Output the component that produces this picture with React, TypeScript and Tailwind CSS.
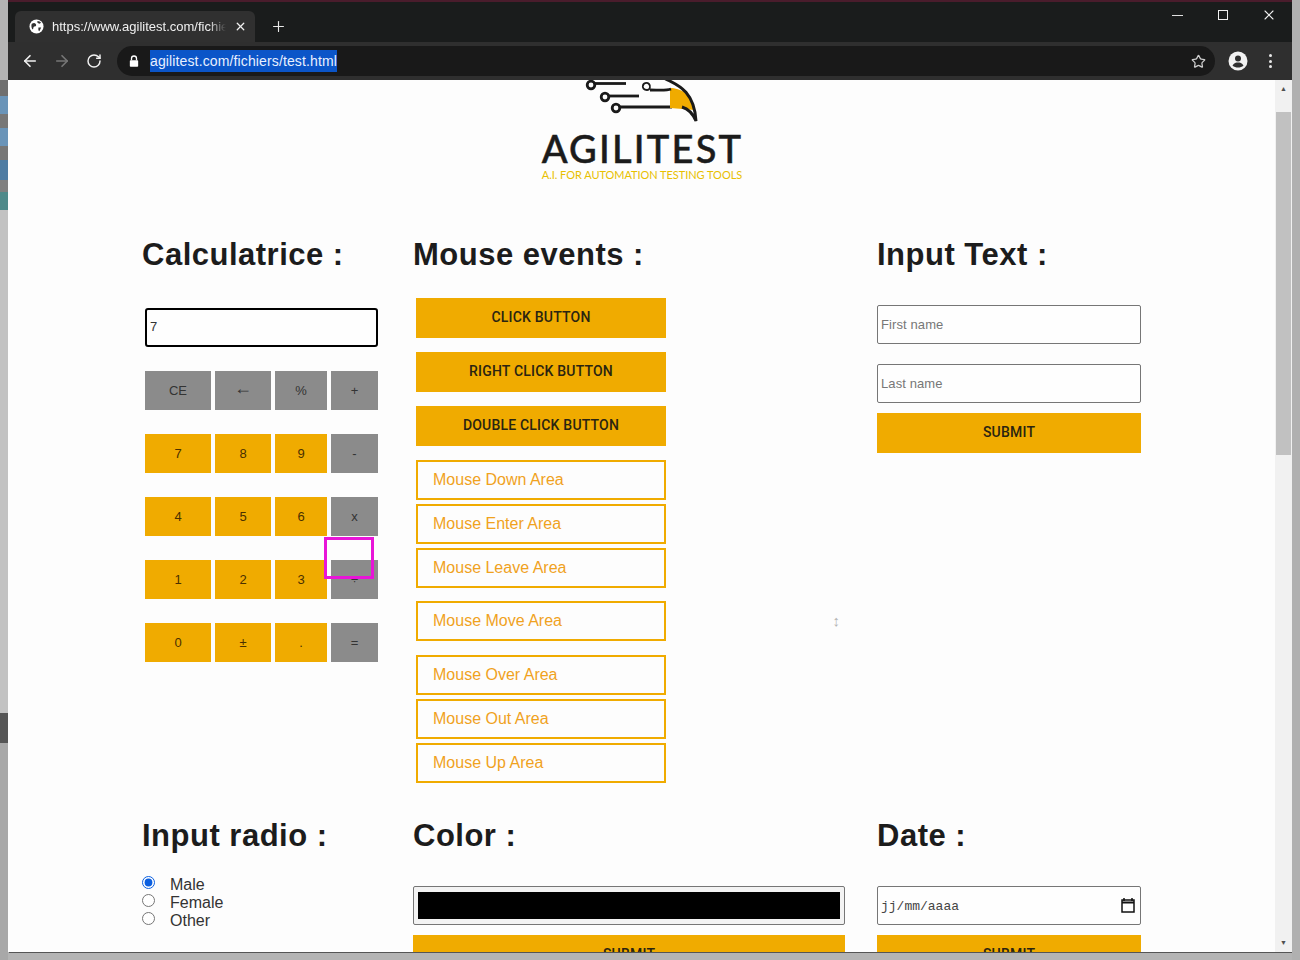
import React from "react";
import { ArrowLeft, ArrowRight, RotateCw, Star, X, Plus } from "lucide-react";

const sans = "font-['Liberation_Sans',Arial,sans-serif]";

function Heading({ children }: { children: React.ReactNode }) {
  return <h2 className="h-[36px] text-[31px] leading-[38px] font-bold tracking-[0.5px] text-[#1c1c1c]">{children}</h2>;
}

function CalcKey({ label, gray }: { label: string; gray?: boolean }) {
  return (
    <div className={`h-[39px] flex items-center justify-center ${label === "←" ? "text-[18px] pb-[5px]" : "text-[13px]"} ${gray ? "bg-[#8b8b8b] text-[#333333]" : "bg-[#f0ab00] text-[#4a3000]"}`}>
      {label}
    </div>
  );
}

function ActionButton({ label, w = "w-[250px]", h = "h-[40px]" }: { label: string; w?: string; h?: string }) {
  return (
    <div className={`${w} ${h} shrink-0 bg-[#f0ab00] flex items-center justify-center pb-[1px] font-['Roboto',sans-serif] text-[14px] font-medium tracking-[0.2px] text-[#2a2411]`}>
      {label}
    </div>
  );
}

function Area({ label }: { label: string }) {
  return (
    <div className="w-[250px] h-[40px] border-2 border-[#f0ab00] flex items-center pl-[15px] text-[16px] text-[#f0a21e]">
      {label}
    </div>
  );
}

function TextField({ placeholder }: { placeholder: string }) {
  return (
    <input
      readOnly
      placeholder={placeholder}
      className="block w-[264px] h-[39px] border border-[#767676] rounded-[2px] px-[3px] text-[13px] tracking-[0.1px] bg-[#fefefe] placeholder:text-[#777777]"
    />
  );
}

function Logo() {
  return (
    <svg viewBox="0 0 120 45" className="w-[120px] h-[45px] block" fill="none">
      <g stroke="#1a1a1a" strokeWidth="2.8">
        <circle cx="9" cy="5" r="3.8" />
        <circle cx="23" cy="17" r="3.8" />
        <circle cx="34" cy="28" r="3.8" />
        <path d="M13 3.5H44" />
        <path d="M27 16H57" />
        <path d="M38 27H90" />
      </g>
      <path d="M61 6c0-3 4-4 6-2s1 6-2 6-5-2-4-5" stroke="#1a1a1a" strokeWidth="1.8" />
      <path d="M88 8C98 8 111 14 113 30L88 28Z" fill="#f0ab00" />
      <path d="M82 -2C92 4 112 8 114 41C111 34 107 29 100 27" stroke="#1a1a1a" strokeWidth="3" />
      <path d="M68 10C76 10 84 11 89 9" stroke="#1a1a1a" strokeWidth="2.8" />
    </svg>
  );
}

export default function App() {
  const keys: [string, boolean][][] = [
    [["CE", true], ["←", true], ["%", true], ["+", true]],
    [["7", false], ["8", false], ["9", false], ["-", true]],
    [["4", false], ["5", false], ["6", false], ["x", true]],
    [["1", false], ["2", false], ["3", false], ["÷", true]],
    [["0", false], ["±", false], [".", false], ["=", true]],
  ];

  return (
    <div className={`${sans} relative w-[1300px] h-[960px] overflow-hidden flex bg-[#b4b4b4]`}>
      {/* desktop behind the window, left edge */}
      <div className="w-[8px] shrink-0 flex flex-col pt-[80px]">
        <div className="h-[16px] bg-[#6f6f6f]" />
        <div className="h-[18px] bg-[#6a94b8]" />
        <div className="h-[14px] bg-[#777777]" />
        <div className="h-[18px] bg-[#6a94b8]" />
        <div className="h-[14px] bg-[#777777]" />
        <div className="h-[20px] bg-[#4f7ca3]" />
        <div className="h-[12px] bg-[#808080]" />
        <div className="h-[18px] bg-[#4f8a8a]" />
        <div className="h-[503px] bg-[#c2c2c2]" />
        <div className="h-[30px] bg-[#555555]" />
        <div className="flex-1 bg-[#a8a8a8]" />
      </div>

      <div className="w-[1284px] shrink-0 h-[952px] flex flex-col shadow-[1px_1px_0_#555555]">
        {/* tab strip */}
        <div className="h-[42px] shrink-0 bg-[#1a1c1c] border-t-2 border-[#4a1c2c] flex items-end pl-[7px]">
          <div className="w-[240px] h-[31px] bg-[#303030] rounded-t-[6px] flex items-center pl-[14px] pr-[8px] gap-[8px]">
            <svg viewBox="0 0 16 16" className="w-[15px] h-[15px] shrink-0">
              <circle cx="8" cy="8" r="7.5" fill="#ffffff" />
              <path d="M3 5c2-1 3-1 4 0s1 3-1 3-1 3-2 3-2-4-1-6ZM9 2c2 0 3 1 4 2l-2 1-2-1ZM10 9l3 0-2 4-1-1Z" fill="#303030" />
            </svg>
            <span className="flex-1 overflow-hidden whitespace-nowrap text-[13px] text-[#f0f0f0] [mask-image:linear-gradient(to_right,black_90%,transparent)]">https://www.agilitest.com/fichiers/test.html</span>
            <X size={13} color="#f0f0f0" strokeWidth={2.4} className="shrink-0" />
          </div>
          <div className="w-[46px] h-[31px] flex items-center justify-center">
            <Plus size={17} color="#e8e8e8" strokeWidth={1.6} />
          </div>
          <div className="flex-1 self-start flex justify-end items-center h-[26px]">
            <div className="w-[46px] flex justify-center"><div className="w-[11px] h-px bg-[#e0e0e0]" /></div>
            <div className="w-[46px] flex justify-center"><div className="w-[10px] h-[10px] border border-[#f0f0f0]" /></div>
            <div className="w-[46px] flex justify-center"><X size={16} color="#f0f0f0" strokeWidth={1.6} /></div>
          </div>
        </div>

        {/* toolbar */}
        <div className="h-[38px] shrink-0 bg-[#2f2f2f] flex items-center pl-[13px]">
          <ArrowLeft size={18} color="#f2f2f2" strokeWidth={2.2} />
          <ArrowRight size={18} color="#777777" strokeWidth={2.2} className="ml-[14px]" />
          <RotateCw size={16} color="#f2f2f2" strokeWidth={2.2} className="ml-[15px]" />
          <div className="ml-[15px] w-[1098px] h-[30px] rounded-full bg-[#191919] flex items-center pl-[12px] pr-[9px]">
            <svg viewBox="0 0 12 14" className="w-[10px] h-[12px] shrink-0">
              <path d="M3 6V4a3 3 0 0 1 6 0v2" stroke="#fff" strokeWidth="1.6" fill="none" />
              <rect x="1" y="6" width="10" height="8" rx="1" fill="#fff" />
            </svg>
            <span className="ml-[11px] h-[22px] flex items-center bg-[#0b55c8] text-[14px] tracking-[0.13px] text-[#e8f0ff] whitespace-nowrap">agilitest.com/fichiers/test.html</span>
            <Star size={15} color="#cfcfcf" strokeWidth={2} className="ml-auto" />
          </div>
          <svg viewBox="0 0 20 20" className="w-[20px] h-[20px] ml-[13px] shrink-0">
            <circle cx="10" cy="10" r="9.5" fill="#f2f2f2" />
            <circle cx="10" cy="7.5" r="3" fill="#2f2f2f" />
            <path d="M4.5 14.5c1.5-2.5 3.5-3 5.5-3s4 .5 5.5 3c-1.5 1.5-3.5 2-5.5 2s-4-.5-5.5-2Z" fill="#2f2f2f" />
          </svg>
          <div className="ml-[21px] flex flex-col gap-[2.5px]">
            <div className="w-[3px] h-[3px] rounded-full bg-[#e8e8e8]" />
            <div className="w-[3px] h-[3px] rounded-full bg-[#e8e8e8]" />
            <div className="w-[3px] h-[3px] rounded-full bg-[#e8e8e8]" />
          </div>
        </div>

        {/* page + scrollbar */}
        <div className="flex-1 min-h-0 flex">
          <div className="w-[1267px] overflow-hidden bg-[#fdfdfd]">
            <div className="flex flex-col items-center">
              <Logo />
              <div className="h-[46px] pl-[2px] font-['Lato',sans-serif] text-[38px] leading-[46px] font-medium tracking-[2.2px] text-[#1b1b1b] [-webkit-text-stroke:0.5px_#1b1b1b]">AGILITEST</div>
              <div className="mt-[-3px] h-[14px] pl-[1px] font-['Lato',sans-serif] text-[11px] leading-[14px] tracking-[-0.05px] text-[#e8c000]">A.I. FOR AUTOMATION TESTING TOOLS</div>
            </div>

            <div className="mt-[54px] pl-[134px] flex">
              <section className="w-[271px] shrink-0">
                <Heading>Calculatrice :</Heading>
                <div className="mt-[36px] ml-[3px] w-[233px]">
                  <input
                    readOnly
                    value="7"
                    className="block w-[233px] h-[39px] border-2 border-black rounded-[3px] px-[3px] pb-[2px] text-[13px] text-[#333333] bg-[#fefefe]"
                  />
                  <div className="mt-[24px] grid grid-cols-[66px_56px_52px_47px] gap-x-[4px] gap-y-[24px]">
                    {keys.flat().map(([label, gray], i) => (
                      <CalcKey key={i} label={label} gray={gray} />
                    ))}
                  </div>
                </div>
              </section>

              <section className="w-[464px] shrink-0">
                <Heading>Mouse events :</Heading>
                <div className="mt-[26px] ml-[3px] flex flex-col">
                  <div className="flex flex-col gap-[14px]">
                    <ActionButton label="CLICK BUTTON" />
                    <ActionButton label="RIGHT CLICK BUTTON" />
                    <ActionButton label="DOUBLE CLICK BUTTON" />
                  </div>
                  <div className="mt-[14px] flex flex-col gap-[4px]">
                    <Area label="Mouse Down Area" />
                    <Area label="Mouse Enter Area" />
                    <Area label="Mouse Leave Area" />
                  </div>
                  <div className="mt-[13px] w-[429px] flex items-center justify-between">
                    <Area label="Mouse Move Area" />
                    <span className="pr-[5px] text-[15px] text-[#b5b5b5]">↕</span>
                  </div>
                  <div className="mt-[14px] flex flex-col gap-[4px]">
                    <Area label="Mouse Over Area" />
                    <Area label="Mouse Out Area" />
                    <Area label="Mouse Up Area" />
                  </div>
                </div>
              </section>

              <section className="w-[264px] shrink-0">
                <Heading>Input Text :</Heading>
                <div className="mt-[33px]">
                  <TextField placeholder="First name" />
                  <div className="mt-[20px]"><TextField placeholder="Last name" /></div>
                  <div className="mt-[10px]"><ActionButton label="SUBMIT" w="w-[264px]" /></div>
                </div>
              </section>
            </div>

            <div className="mt-[34px] pl-[134px] flex">
              <section className="w-[271px] shrink-0">
                <Heading>Input radio :</Heading>
                <div className="mt-[23px] flex flex-col text-[16px] leading-[18px] text-[#333333]">
                  {["Male", "Female", "Other"].map((r, i) => (
                    <label key={r} className="h-[18px] flex items-center">
                      <input type="radio" name="gender" defaultChecked={i === 0} className="w-[13px] h-[13px] accent-[#0b5fe0] relative top-[-3px]" />
                      <span className="ml-[15px]">{r}</span>
                    </label>
                  ))}
                </div>
              </section>

              <section className="w-[464px] shrink-0">
                <Heading>Color :</Heading>
                <div className="mt-[33px] w-[432px] h-[39px] border border-[#767676] rounded-[2px] px-[4px] py-[5px] bg-[#f3f3f3]">
                  <div className="h-full bg-black" />
                </div>
                <div className="mt-[10px]"><ActionButton label="SUBMIT" w="w-[432px]" /></div>
              </section>

              <section className="w-[264px] shrink-0">
                <Heading>Date :</Heading>
                <div className="mt-[33px] w-[264px] h-[39px] border border-[#767676] rounded-[2px] flex items-center pl-[3px] pr-[5px] bg-[#fefefe]">
                  <span className="pt-[2px] font-['Liberation_Mono',monospace] text-[13px] text-[#444444]">jj/mm/aaaa</span>
                  <svg viewBox="0 0 14 15" className="w-[14px] h-[15px] ml-auto">
                    <path d="M3 0v3M11 0v3" stroke="#111" strokeWidth="1.5" />
                    <rect x="1" y="2" width="12" height="12" fill="none" stroke="#111" strokeWidth="1.5" />
                    <path d="M1 4.5h12" stroke="#111" strokeWidth="2" />
                  </svg>
                </div>
                <div className="mt-[10px]"><ActionButton label="SUBMIT" w="w-[264px]" /></div>
              </section>
            </div>
          </div>

          {/* scrollbar */}
          <div className="w-[17px] shrink-0 bg-[#f1f1f1] flex flex-col items-center">
            <div className="h-[17px] shrink-0 flex items-center justify-center text-[7px] text-[#505050] mt-[1px]">▲</div>
            <div className="mt-[14px] w-[15px] h-[343px] bg-[#c1c1c1]" />
            <div className="mt-auto h-[17px] shrink-0 flex items-center justify-center text-[7px] text-[#505050]">▼</div>
          </div>
        </div>
      </div>

      <div className="w-[8px] shrink-0 bg-[#b0b0b0]" />

      {/* click-target highlight drawn over the page */}
      <div className="absolute left-[324px] top-[537px] w-[50px] h-[42px] border-[3px] border-[#e815d8]" />
    </div>
  );
}
